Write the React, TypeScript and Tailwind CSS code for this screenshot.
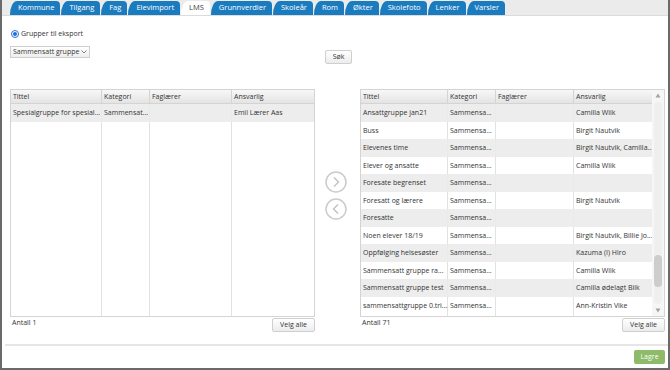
import React from "react";

const tabs = ["Kommune", "Tilgang", "Fag", "Elevimport", "LMS", "Grunnverdier", "Skoleår", "Rom", "Økter", "Skolefoto", "Lenker", "Varsler"];

type Row = [string, string, string, string];

const leftRows: Row[] = [["Spesialgruppe for spesial...", "Sammensat...", "", "Emil Lærer Aas"]];

const rightRows: Row[] = [
  ["Ansattgruppe jan21", "Sammensa...", "", "Camilla Wiik"],
  ["Buss", "Sammensa...", "", "Birgit Nautvik"],
  ["Elevenes time", "Sammensa...", "", "Birgit Nautvik, Camilla..."],
  ["Elever og ansatte", "Sammensa...", "", "Camilla Wiik"],
  ["Foresate begrenset", "Sammensa...", "", ""],
  ["Foresatt og lærere", "Sammensa...", "", "Birgit Nautvik"],
  ["Foresatte", "Sammensa...", "", ""],
  ["Noen elever 18/19", "Sammensa...", "", "Birgit Nautvik, Billie Jo..."],
  ["Oppfølging helsesøster", "Sammensa...", "", "Kazuma (I) Hiro"],
  ["Sammensatt gruppe ra...", "Sammensa...", "", "Camilla Wiik"],
  ["Sammensatt gruppe test", "Sammensa...", "", "Camilla ødelagt Biik"],
  ["sammensattgruppe 0.tri...", "Sammensa...", "", "Ann-Kristin Vike"],
];

const headers = ["Tittel", "Kategori", "Faglærer", "Ansvarlig"];

function Grid({ widths, rows, scroll }: { widths: number[]; rows: Row[]; scroll?: boolean }) {
  return (
    <div className="flex h-[228px] w-[305px] shrink-0 border border-[#d4d4d4] bg-white">
      <div className="relative flex-1 overflow-hidden">
        {/* column lines */}
        <div className="absolute inset-0 flex">
          {widths.map((w, i) => (
            <div key={i} style={{ width: w }} className="h-full shrink-0 border-r border-[#e2e2e2] last:border-r-0" />
          ))}
        </div>
        <div className="relative">
          <div className="flex h-[14px] border-b border-[#d4d4d4] bg-gradient-to-b from-[#f7f7f7] to-[#e4e4e4]">
            {headers.map((h, i) => (
              <div key={h} style={{ width: widths[i] }} className="shrink-0 border-r border-[#d4d4d4] pl-[2px] leading-[14px] last:border-r-0">
                {h}
              </div>
            ))}
          </div>
          {rows.map((r, ri) => (
            <div key={ri} className={`flex h-[17.5px] ${ri % 2 === 0 ? "bg-[#ebebeb]/90" : ""}`}>
              {r.map((c, i) => (
                <div key={i} style={{ width: widths[i] }} className="shrink-0 overflow-hidden whitespace-nowrap pl-[2px] leading-[17.5px]">
                  {c}
                </div>
              ))}
            </div>
          ))}
        </div>
      </div>
      {scroll && (
        <div className="flex w-[12px] flex-col items-center bg-[#f6f6f6] py-[3px]">
          <svg width="6" height="5" viewBox="0 0 6 5"><path d="M3 0.5L5.5 4.5H0.5z" fill="#a3a3a3" /></svg>
          <div className="mt-[4px] flex w-[8px] flex-1 flex-col rounded-[4px] bg-[#efefef]">
            <div className="h-[153px]" />
            <div className="h-[32px] rounded-[4px] bg-[#cdcdcd]" />
          </div>
          <svg className="mt-[4px]" width="6" height="5" viewBox="0 0 6 5"><path d="M0.5 0.5H5.5L3 4.5z" fill="#a3a3a3" /></svg>
        </div>
      )}
    </div>
  );
}

function Btn({ children, className = "" }: { children: React.ReactNode; className?: string }) {
  return (
    <div className={`flex h-[14px] items-center justify-center rounded-[2px] border border-[#cfcfcf] bg-gradient-to-b from-white to-[#ececec] text-[#333] ${className}`}>
      {children}
    </div>
  );
}

function Circle({ dir }: { dir: "r" | "l" }) {
  return (
    <svg width="22" height="22" viewBox="0 0 22 22">
      <circle cx="11" cy="11" r="10" fill="none" stroke="#cbcbcb" strokeWidth="1.5" />
      <path d={dir === "r" ? "M9 6.5L13.5 11L9 15.5" : "M13 6.5L8.5 11L13 15.5"} fill="none" stroke="#c4c4c4" strokeWidth="1.5" />
    </svg>
  );
}

export default function App() {
  return (
    <div className="flex h-[370px] w-[670px] flex-col border-x-2 border-b-2 border-[#6a6a6a] bg-white text-[7px] text-[#333]" style={{ fontFamily: '"Open Sans", sans-serif' }}>
      <div className="flex h-[16px] shrink-0 items-end gap-[1px] border-b border-[#dcdcdc] bg-[#ebebeb] pl-[8px]">
        {tabs.map((t) => (
          <div
            key={t}
            className={`flex h-[14px] items-center rounded-tl-[7px_14px] rounded-tr-[4px] pl-[8px] pr-[6px] text-[7.5px] ${t === "LMS" ? "bg-white text-[#444]" : "bg-[#1b7bbf] text-white"}`}
          >
            {t}
          </div>
        ))}
      </div>

      <div className="flex flex-1 flex-col pl-[8px] pr-[3px]">
        <div className="mt-[13px] flex items-center gap-[2px] pl-[1px]">
          <span className="flex h-[8px] w-[8px] items-center justify-center rounded-full border border-[#2a6fd6] bg-white">
            <span className="h-[4px] w-[4px] rounded-full bg-[#1a6fe0]" />
          </span>
          <span className="leading-[10px]">Grupper til eksport</span>
        </div>

        <div className="relative mt-[7px] h-[18px]">
          <div className="flex h-[12px] w-[80px] items-center gap-[2px] border border-[#cfcfcf] bg-gradient-to-b from-white to-[#eeeeee] pl-[2px]">
            Sammensatt gruppe
            <svg width="6" height="4" viewBox="0 0 6 4"><path d="M0.5 0.5L3 3L5.5 0.5" fill="none" stroke="#666" strokeWidth="0.8" /></svg>
          </div>
          <Btn className="absolute left-[315px] top-[4px] h-[14px] w-[27px]">Søk</Btn>
        </div>

        <div className="mt-[25px] flex items-start">
          <div className="flex flex-col">
            <Grid widths={[91, 48, 82, 84]} rows={leftRows} />
            <div className="flex items-start justify-between">
              <span className="mt-[1px] pl-[2px]">Antall 1</span>
              <Btn className="mt-[1px] w-[43px]">Velg alle</Btn>
            </div>
          </div>
          <div className="flex w-[45px] shrink-0 flex-col items-center gap-[5px] pr-[3px] pt-[82px]">
            <Circle dir="r" />
            <Circle dir="l" />
          </div>
          <div className="flex flex-col">
            <Grid widths={[87, 48, 78, 79]} rows={rightRows} scroll />
            <div className="flex items-start justify-between">
              <span className="mt-[1px] pl-[2px]">Antall 71</span>
              <Btn className="mt-[1px] w-[43px]">Velg alle</Btn>
            </div>
          </div>
        </div>
      </div>

      <div className="ml-[3px] h-[2px] bg-[#e6e6e6]" />
      <div className="flex justify-end px-[3px] pb-[4px] pt-[4px]">
        <div className="flex h-[14px] w-[31px] items-center justify-center rounded-[2px] bg-[#8dbb69] text-white">Lagre</div>
      </div>
    </div>
  );
}
